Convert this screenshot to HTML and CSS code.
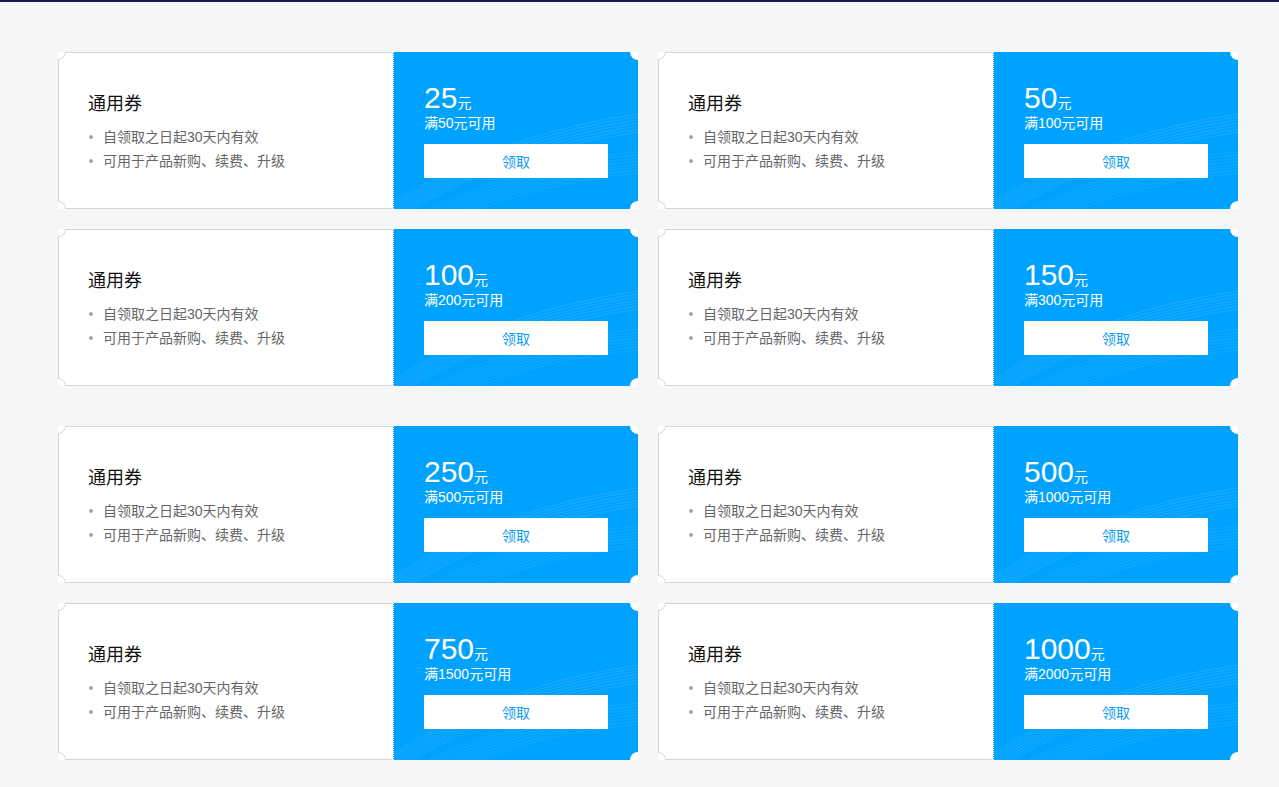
FILE: index.html
```html
<!DOCTYPE html>
<html lang="zh-CN">
  <head>
    <meta charset="UTF-8" />
    <meta name="viewport" content="width=device-width, initial-scale=1.0" />
    <title>领取优惠券</title>
    <link rel="stylesheet" href="styles.css">
  </head>
  <body>
    <div class="page">
      <div class="group">
        <div class="coupon">
          <div class="coupon-info">
            <h3 class="coupon-title">通用券</h3>
            <ul class="coupon-rules">
              <li>自领取之日起30天内有效</li>
              <li>可用于产品新购、续费、升级</li>
            </ul>
          </div>
          <div class="coupon-action">
            <div class="coupon-amount">25<span>元</span></div>
            <div class="coupon-limit">满50元可用</div>
            <button class="coupon-btn">领取</button>
          </div>
          <i class="notch notch-tl"></i><i class="notch notch-bl"></i>
          <i class="notch notch-tr"></i><i class="notch notch-br"></i>
        </div>
        <div class="coupon">
          <div class="coupon-info">
            <h3 class="coupon-title">通用券</h3>
            <ul class="coupon-rules">
              <li>自领取之日起30天内有效</li>
              <li>可用于产品新购、续费、升级</li>
            </ul>
          </div>
          <div class="coupon-action">
            <div class="coupon-amount">50<span>元</span></div>
            <div class="coupon-limit">满100元可用</div>
            <button class="coupon-btn">领取</button>
          </div>
          <i class="notch notch-tl"></i><i class="notch notch-bl"></i>
          <i class="notch notch-tr"></i><i class="notch notch-br"></i>
        </div>
        <div class="coupon">
          <div class="coupon-info">
            <h3 class="coupon-title">通用券</h3>
            <ul class="coupon-rules">
              <li>自领取之日起30天内有效</li>
              <li>可用于产品新购、续费、升级</li>
            </ul>
          </div>
          <div class="coupon-action">
            <div class="coupon-amount">100<span>元</span></div>
            <div class="coupon-limit">满200元可用</div>
            <button class="coupon-btn">领取</button>
          </div>
          <i class="notch notch-tl"></i><i class="notch notch-bl"></i>
          <i class="notch notch-tr"></i><i class="notch notch-br"></i>
        </div>
        <div class="coupon">
          <div class="coupon-info">
            <h3 class="coupon-title">通用券</h3>
            <ul class="coupon-rules">
              <li>自领取之日起30天内有效</li>
              <li>可用于产品新购、续费、升级</li>
            </ul>
          </div>
          <div class="coupon-action">
            <div class="coupon-amount">150<span>元</span></div>
            <div class="coupon-limit">满300元可用</div>
            <button class="coupon-btn">领取</button>
          </div>
          <i class="notch notch-tl"></i><i class="notch notch-bl"></i>
          <i class="notch notch-tr"></i><i class="notch notch-br"></i>
        </div>
      </div>
      <div class="group">
        <div class="coupon">
          <div class="coupon-info">
            <h3 class="coupon-title">通用券</h3>
            <ul class="coupon-rules">
              <li>自领取之日起30天内有效</li>
              <li>可用于产品新购、续费、升级</li>
            </ul>
          </div>
          <div class="coupon-action">
            <div class="coupon-amount">250<span>元</span></div>
            <div class="coupon-limit">满500元可用</div>
            <button class="coupon-btn">领取</button>
          </div>
          <i class="notch notch-tl"></i><i class="notch notch-bl"></i>
          <i class="notch notch-tr"></i><i class="notch notch-br"></i>
        </div>
        <div class="coupon">
          <div class="coupon-info">
            <h3 class="coupon-title">通用券</h3>
            <ul class="coupon-rules">
              <li>自领取之日起30天内有效</li>
              <li>可用于产品新购、续费、升级</li>
            </ul>
          </div>
          <div class="coupon-action">
            <div class="coupon-amount">500<span>元</span></div>
            <div class="coupon-limit">满1000元可用</div>
            <button class="coupon-btn">领取</button>
          </div>
          <i class="notch notch-tl"></i><i class="notch notch-bl"></i>
          <i class="notch notch-tr"></i><i class="notch notch-br"></i>
        </div>
        <div class="coupon">
          <div class="coupon-info">
            <h3 class="coupon-title">通用券</h3>
            <ul class="coupon-rules">
              <li>自领取之日起30天内有效</li>
              <li>可用于产品新购、续费、升级</li>
            </ul>
          </div>
          <div class="coupon-action">
            <div class="coupon-amount">750<span>元</span></div>
            <div class="coupon-limit">满1500元可用</div>
            <button class="coupon-btn">领取</button>
          </div>
          <i class="notch notch-tl"></i><i class="notch notch-bl"></i>
          <i class="notch notch-tr"></i><i class="notch notch-br"></i>
        </div>
        <div class="coupon">
          <div class="coupon-info">
            <h3 class="coupon-title">通用券</h3>
            <ul class="coupon-rules">
              <li>自领取之日起30天内有效</li>
              <li>可用于产品新购、续费、升级</li>
            </ul>
          </div>
          <div class="coupon-action">
            <div class="coupon-amount">1000<span>元</span></div>
            <div class="coupon-limit">满2000元可用</div>
            <button class="coupon-btn">领取</button>
          </div>
          <i class="notch notch-tl"></i><i class="notch notch-bl"></i>
          <i class="notch notch-tr"></i><i class="notch notch-br"></i>
        </div>
      </div>
    </div>
  </body>
</html>
```

FILE: styles.css
```css
html,
body {
  margin: 0;
  padding: 0;
}
body {
  min-height: 100vh;
  box-sizing: border-box;
  background-color: #f5f6f8;
  border-top: 2px solid #131d52;
  font-family: "Liberation Sans", "Noto Sans CJK SC", sans-serif;
}
.page {
  display: flex;
  flex-direction: column;
  gap: 40px;
  padding: 50px 41px 27px 58px;
}
.group {
  display: grid;
  grid-template-columns: 580px 580px;
  gap: 20px;
}
.coupon {
  position: relative;
  display: flex;
  height: 157px;
  overflow: hidden;
}
.coupon-info {
  flex: 0 0 335px;
  box-sizing: border-box;
  background-color: #ffffff;
  border: 1px solid #d6d6d6;
  border-right: none;
  padding: 39px 0 0 29px;
}
.coupon-title {
  margin: 0 0 9px;
  font-size: 18px;
  font-weight: normal;
  line-height: 24px;
  color: #111111;
}
.coupon-rules {
  margin: 0;
  padding: 0;
  list-style: none;
}
.coupon-rules li {
  display: flex;
  align-items: center;
  gap: 10px;
  font-size: 14px;
  line-height: 24px;
  color: #666666;
}
.coupon-rules li::before {
  content: "";
  width: 4px;
  height: 4px;
  margin-left: 1px;
  border-radius: 50%;
  background-color: #a6a6a6;
}
.coupon-action {
  flex: 1;
  display: flex;
  flex-direction: column;
  align-items: flex-start;
  padding: 31px 30px 0 30px;
  border-left: 1px dotted #ffffff;
  color: #ffffff;
  background-color: #00a2ff;
  background-image: url("data:image/svg+xml,%3Csvg xmlns='http://www.w3.org/2000/svg' width='245' height='157' fill='none' stroke='white' stroke-width='0.9'%3E%3Cg stroke-opacity='0.13'%3E%3Cpath d='M0 150 Q110 80 245 62'/%3E%3Cpath d='M0 153 Q110 83 245 65'/%3E%3Cpath d='M0 156 Q110 86 245 68'/%3E%3Cpath d='M0 159 Q110 89 245 71'/%3E%3Cpath d='M0 162 Q110 92 245 74'/%3E%3Cpath d='M0 165 Q110 95 245 77'/%3E%3Cpath d='M0 168 Q110 98 245 80'/%3E%3C/g%3E%3Cg stroke-opacity='0.09'%3E%3Cpath d='M0 175 Q120 110 245 100'/%3E%3Cpath d='M0 178 Q120 113 245 103'/%3E%3Cpath d='M0 181 Q120 116 245 106'/%3E%3Cpath d='M0 184 Q120 119 245 109'/%3E%3Cpath d='M0 187 Q120 122 245 112'/%3E%3Cpath d='M0 190 Q120 125 245 115'/%3E%3Cpath d='M0 193 Q120 128 245 118'/%3E%3Cpath d='M0 196 Q120 131 245 121'/%3E%3C/g%3E%3C/svg%3E");
  background-repeat: no-repeat;
}
.coupon-amount {
  font-size: 30px;
  line-height: 30px;
}
.coupon-amount span {
  font-size: 14px;
  line-height: 14px;
}
.coupon-limit {
  font-size: 14px;
  line-height: 20px;
}
.coupon-btn {
  width: 184px;
  height: 34px;
  margin-top: 11px;
  padding: 0;
  border: none;
  background-color: #ffffff;
  color: #0a9cf2;
  font-family: inherit;
  font-size: 14px;
  cursor: pointer;
}
.notch {
  position: absolute;
  width: 16px;
  height: 16px;
  box-sizing: border-box;
  border-radius: 50%;
  background-color: #ffffff;
}
.notch-tl,
.notch-bl {
  left: -8px;
  border: 1px solid #d6d6d6;
}
.notch-tr,
.notch-br {
  right: -8px;
}
.notch-tl,
.notch-tr {
  top: -8px;
}
.notch-bl,
.notch-br {
  bottom: -8px;
}
```
